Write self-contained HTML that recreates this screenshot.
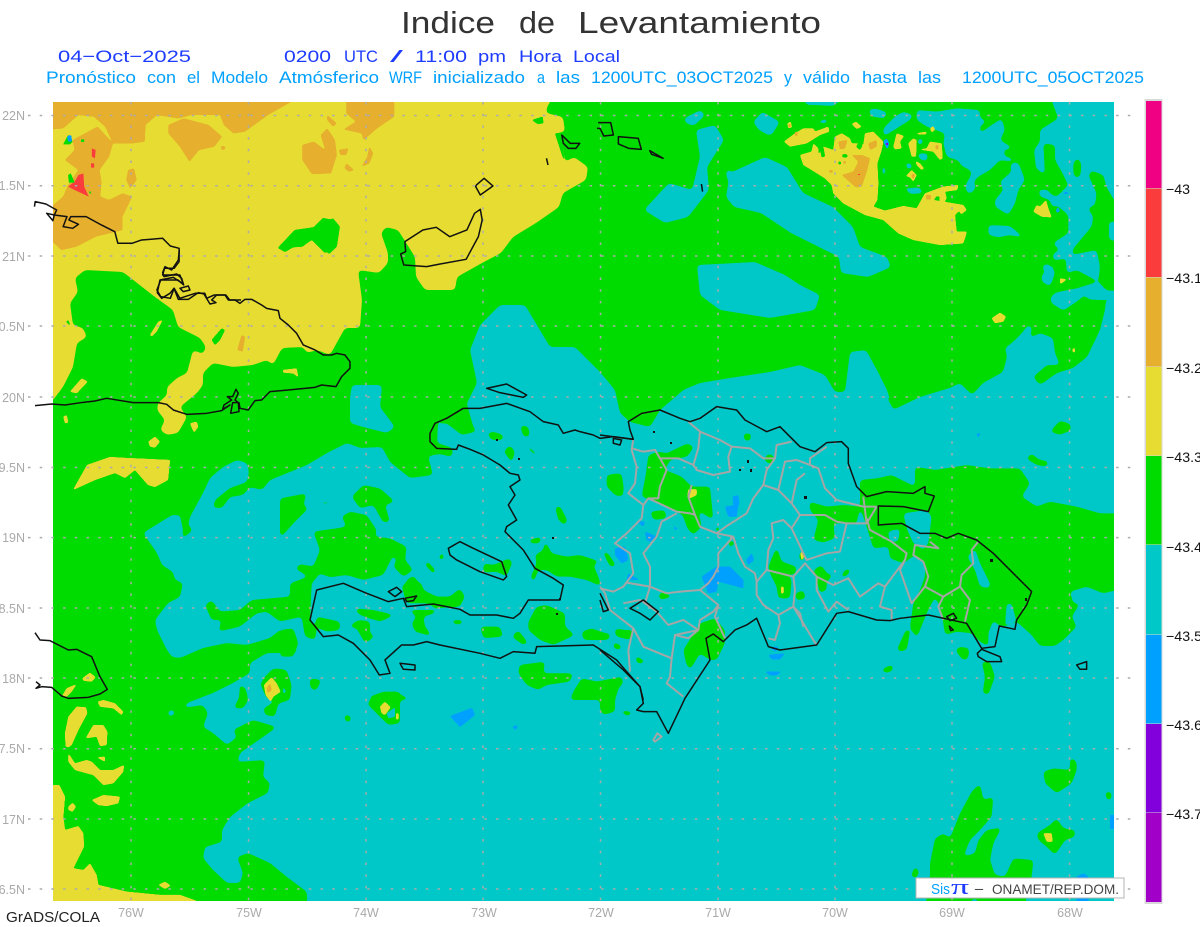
<!DOCTYPE html>
<html><head><meta charset="utf-8"><title>Indice de Levantamiento</title>
<style>html,body{margin:0;padding:0;background:#fff}svg{display:block}
text{font-family:"Liberation Sans",sans-serif}
.c{fill:#00c8c8}.g{fill:#00dc00}.y{fill:#e6dc32}.o{fill:#e6af2d}.r{fill:#fa3c3c}.b{fill:#00a0ff}
.coast *{fill:none;stroke:#111;stroke-width:1.5;stroke-linejoin:round;vector-effect:non-scaling-stroke}
.prov *{fill:none;stroke:#a6a6a6;stroke-width:2;stroke-linejoin:round;vector-effect:non-scaling-stroke}
.lab{fill:#aaa;font-size:12.5px}.cb{fill:#111;font-size:14px}
.t1 text{font-size:31px;fill:#333}.t2 text{font-size:17px;fill:#1e3cff}.t3 text{font-size:16.5px;fill:#00a0ff}
</style></head><body>
<svg width="1200" height="927" viewBox="0 0 1200 927" xmlns="http://www.w3.org/2000/svg">
<defs>
<clipPath id="m"><rect x="53" y="102" width="1061" height="799"/></clipPath>
<filter id="s" filterUnits="userSpaceOnUse" x="0" y="0" width="1200" height="927" color-interpolation-filters="sRGB"><feGaussianBlur stdDeviation="2"/><feColorMatrix values="1 0 0 0 0 0 1 0 0 0 0 0 1 0 0 0 0 0 12 -5.5"/></filter>
<filter id="t" filterUnits="userSpaceOnUse" x="0" y="0" width="1200" height="927" color-interpolation-filters="sRGB"><feGaussianBlur stdDeviation="0.9"/><feColorMatrix values="1 0 0 0 0 0 1 0 0 0 0 0 1 0 0 0 0 0 8 -3"/></filter>
</defs>
<rect width="1200" height="927" fill="#fff"/>
<g class="t1">
<text x="401" y="33" textLength="94" lengthAdjust="spacingAndGlyphs">Indice</text>
<text x="519" y="33" textLength="36" lengthAdjust="spacingAndGlyphs">de</text>
<text x="578" y="33" textLength="243" lengthAdjust="spacingAndGlyphs">Levantamiento</text>
</g>
<g class="t2">
<text x="58" y="62" textLength="133" lengthAdjust="spacingAndGlyphs">04−Oct−2025</text>
<text x="284" y="62" textLength="47" lengthAdjust="spacingAndGlyphs">0200</text>
<text x="344" y="62" textLength="34" lengthAdjust="spacingAndGlyphs">UTC</text>
<text x="390" y="62" textLength="13" lengthAdjust="spacingAndGlyphs">/</text>
<text x="415" y="62" textLength="52" lengthAdjust="spacingAndGlyphs">11:00</text>
<text x="478" y="62" textLength="28" lengthAdjust="spacingAndGlyphs">pm</text>
<text x="519" y="62" textLength="43" lengthAdjust="spacingAndGlyphs">Hora</text>
<text x="573" y="62" textLength="47" lengthAdjust="spacingAndGlyphs">Local</text>
</g>
<g class="t3">
<text x="46" y="83" textLength="90" lengthAdjust="spacingAndGlyphs">Pronóstico</text>
<text x="147" y="83" textLength="29" lengthAdjust="spacingAndGlyphs">con</text>
<text x="187" y="83" textLength="13" lengthAdjust="spacingAndGlyphs">el</text>
<text x="211" y="83" textLength="57" lengthAdjust="spacingAndGlyphs">Modelo</text>
<text x="279" y="83" textLength="100" lengthAdjust="spacingAndGlyphs">Atmósferico</text>
<text x="389" y="83" textLength="33" lengthAdjust="spacingAndGlyphs">WRF</text>
<text x="433" y="83" textLength="92" lengthAdjust="spacingAndGlyphs">inicializado</text>
<text x="537" y="83" textLength="8" lengthAdjust="spacingAndGlyphs">a</text>
<text x="556" y="83" textLength="24" lengthAdjust="spacingAndGlyphs">las</text>
<text x="591" y="83" textLength="182" lengthAdjust="spacingAndGlyphs">1200UTC_03OCT2025</text>
<text x="784" y="83" textLength="8" lengthAdjust="spacingAndGlyphs">y</text>
<text x="803" y="83" textLength="47" lengthAdjust="spacingAndGlyphs">válido</text>
<text x="862" y="83" textLength="45" lengthAdjust="spacingAndGlyphs">hasta</text>
<text x="918" y="83" textLength="23" lengthAdjust="spacingAndGlyphs">las</text>
<text x="962" y="83" textLength="182" lengthAdjust="spacingAndGlyphs">1200UTC_05OCT2025</text>
</g>
<g clip-path="url(#m)">
<rect x="53" y="102" width="1061" height="799" class="c"/>
<g filter="url(#s)"><polygon class="g" points="45,94 1122,94 1122,292 1106,300 1105,310 1100,330 1087,357 1073,368 1057,373 1040,385 1033,377 1047,365 1060,365 1055,353 1053,338 1040,333 1030,338 1032,327 1028,325 1022,333 1013,342 1005,348 1007,357 1003,372 983,383 972,395 960,383 950,388 943,390 920,397 893,410 887,390 878,372 866,350 850,352 845,392 835,392 825,375 800,365 770,372 730,378 700,383 683,390 680,393 660,410 650,427 630,422 620,413 615,390 600,372 575,347 550,347 525,305 500,305 480,325 470,350 477,383 467,403 453,413 438,423 437,443 453,448 452,457 440,454 428,456 433,475 410,478 390,462 382,447 360,448 347,443 327,453 307,465 290,472 270,480 262,490 250,487 243,495 230,497 222,508 213,508 215,500 230,488 247,482 249,472 247,463 237,460 223,467 210,478 203,493 190,517 188,525 193,530 182,539 183,530 180,515 172,515 143,533 157,553 162,565 173,572 175,580 183,583 180,597 168,603 155,620 157,630 167,650 172,657 180,658 203,648 227,643 247,645 270,638 280,630 293,632 297,653 267,653 250,663 250,673 233,683 213,693 187,703 183,708 203,705 208,713 203,727 213,733 227,745 237,737 233,730 253,720 277,727 263,737 240,753 237,762 265,760 263,777 270,783 268,793 248,803 230,817 222,830 222,842 205,847 203,858 213,870 227,883 240,883 243,873 237,857 248,853 270,863 287,877 307,892 307,910 45,910"/></g>
<!-- cyan on green -->
<g filter="url(#s)"><g class="c">
<polygon points="350,397 352,385 382,385 380,407 395,427 387,433 363,427 350,423"/>
<polygon points="726,197 730,173 765,157 787,167 803,193 833,207 853,227 860,247 887,257 891,267 868,277 841,273 839,257 791,233 761,213 734,207"/>
<polygon points="644,210 669,183 692,190 700,157 696,130 715,125 724,140 707,167 709,190 688,217 665,223"/>
<polygon points="697,265 755,262 785,275 800,285 820,295 815,310 770,318 720,310 700,295"/>
<g transform="translate(960,100) scale(.3333)">
<polygon points="265,-25 480,-25 480,310 462,300 440,262 430,225 395,212 385,225 410,280 405,315 383,325 400,350 395,380 340,445 335,465 410,450 420,500 415,545 350,510 320,520 318,475 280,482 278,462 300,450 278,430 325,400 325,345 290,315 295,285 325,255 305,215 285,180 285,135 250,130 255,225 228,205 222,150 240,125 240,90 295,55"/>
<polygon points="480,572 440,572 415,545 350,565 285,578 270,595 275,610 310,632 320,625 350,605 375,585 385,598 415,600 438,600 480,610"/>
<polygon points="0,25 45,45 80,65 50,85 60,100 95,75 125,55 135,90 120,120 160,145 130,150 135,170 165,175 150,185 120,180 90,210 55,230 40,245 48,265 30,282 18,270 18,250 38,225 30,210 0,195"/>
<polygon points="120,245 155,215 150,195 170,185 178,195 195,240 175,270 165,310 145,345 105,320 105,300 130,270"/>
<polygon points="245,525 258,515 245,505 255,490 278,500 285,520 270,560 245,545"/>
<polygon points="85,375 150,378 195,415 150,405 115,412 85,405"/>
<polygon points="447,365 480,365 480,425 447,420"/>
<polygon points="330,670 345,670 345,675 330,675"/><polygon points="38,642 50,650 42,658"/>
<polygon points="235,270 262,268 275,285 325,300 325,315 275,320 270,300 240,290"/>
</g>
<g transform="translate(770,100) scale(.3333)">
<polygon points="300,30 320,25 350,40 340,55 300,45"/>
<polygon points="340,85 375,50 400,35 430,45 420,60 380,85 340,110"/>
<polygon points="440,30 500,35 560,25 630,30 630,225 610,230 615,262 595,282 585,262 608,215 590,190 530,170 520,130 525,100 470,80 440,60"/>
<polygon points="140,65 170,55 175,70 135,70"/><polygon points="-10,60 30,65 5,105 -10,105"/>
<polygon points="95,-10 175,-10 150,15 110,15"/><polygon points="225,-10 250,-10 240,10"/>
<polygon points="238,110 255,105 252,118 240,118"/><polygon points="130,85 140,80 147,90 138,97"/>
<polygon points="405,185 430,195 420,210 410,205"/><polygon points="440,160 475,160 470,185 450,178"/>
<polygon points="395,235 410,265 450,262 460,280 420,282 400,262"/><polygon points="450,225 455,235 445,238"/>
<polygon points="442,120 455,110 460,130 445,138"/><polygon points="465,110 485,98 475,120"/>
<polygon points="118,245 130,260 120,262"/><polygon points="335,200 345,195 348,225 338,230"/>
</g>
<g transform="translate(600,0) scale(.3827,.3333)">
<polygon points="220,355 262,330 275,345 245,378 222,368"/>
<polygon points="425,335 445,350 470,365 440,405 415,390 400,365"/>
<polygon points="700,325 750,335 745,355 710,350"/>
<polygon points="330,505 365,535 345,560 330,530"/>
<polygon points="540,290 640,290 610,318 560,315"/>
</g>
<g transform="translate(0,620) scale(.3333)">
<polygon points="500,275 520,268 527,280 510,292"/><polygon points="707,112 715,110 725,140 715,135"/>
</g>
</g></g>
<!-- green on cyan -->
<g filter="url(#s)"><g class="g">
<g transform="translate(960,100) scale(.3333)">
<polygon points="340,190 352,172 364,190 362,225 350,237 340,220"/>
<polygon points="275,995 300,962 330,975 333,995"/>
</g>
<g transform="translate(130,440) scale(.3333)">
<polygon points="225,495 245,480 270,515 330,510 365,480 480,470 480,430 535,410 495,385 510,372 550,380 570,330 550,275 620,265 650,260 635,230 660,215 710,225 740,270 735,290 780,295 830,320 825,360 850,390 820,410 875,430 880,450 820,410 790,380 800,360 790,345 760,405 700,420 650,405 600,412 570,400 545,430 540,540 560,570 555,600 525,590 515,530 450,545 410,515 380,520 330,560 265,575 275,540 245,540"/>
<polygon points="400,715 430,685 470,700 480,720 400,720"/>
</g>
<g transform="translate(280,380) scale(.3333)">
<polygon points="355,0 590,0 590,10 560,70 580,140 590,155 545,165 500,130 475,130 470,100 440,60"/>
<polygon points="0,355 80,340 70,375 85,385 40,430 0,475"/>
<polygon points="0,750 40,745 55,790 40,830 0,830"/>
<polygon points="400,585 430,630 470,650 510,650 540,625 555,650 540,680 470,685 440,670 380,670 365,620"/>
<polygon points="385,690 470,690 465,700 430,710 435,740 458,770 405,755 395,730 410,710"/>
<polygon points="620,160 640,155 670,165 670,180 635,180"/>
<polygon points="720,135 745,140 750,170 730,170"/>
<polygon points="690,100 700,105 695,120 685,110"/>
<polygon points="670,215 690,195 705,215 695,250 680,225"/>
<polygon points="745,195 775,225 765,228 742,205"/>
<polygon points="985,285 1025,280 1032,330 1010,350 985,315"/>
<polygon points="825,380 840,378 862,420 855,437 835,420"/>
<polygon points="765,525 790,510 795,480 815,520 860,530 900,525 960,545 940,555 955,590 965,620 920,600 870,590 830,590 800,570 775,570 760,610 752,590 770,550"/>
<polygon points="745,480 785,470 780,490 750,490"/>
<polygon points="440,540 470,575 460,582 435,555"/>
<polygon points="475,530 490,515 493,538 478,540"/>
<polygon points="610,550 640,555 665,545 685,535 698,545 680,590 650,575 610,578"/>
<polygon points="220,685 280,690 345,705 300,725 240,705"/>
<polygon points="205,740 235,720 270,725 270,760 285,770 255,790 230,745"/>
<polygon points="110,710 180,725 180,750 140,755 105,740"/>
<polygon points="515,720 555,720 540,735 515,730"/>
<polygon points="600,740 660,740 670,770 610,775"/>
<polygon points="695,770 715,750 745,790 730,795"/>
<polygon points="770,680 800,675 855,700 855,740 885,765 820,795 780,780 745,750 745,725"/>
<polygon points="905,755 935,745 990,765 985,780 910,780"/>
<polygon points="1005,745 1060,755 1050,780 1010,770"/>
<polygon points="1000,785 1030,800 1005,808"/>
<polygon points="1065,825 1100,850 1075,850"/>
<polygon points="718,855 795,845 790,880 880,880 870,905 800,915 775,930 740,915 715,880"/>
<polygon points="880,935 905,895 950,905 1025,890 1030,910 1005,935 1000,960 870,960"/>
<polygon points="90,895 125,900 105,930 90,920"/>
<polygon points="270,950 310,935 380,950 385,960 270,960"/>
<polygon points="215,350 250,315 300,325 345,365 315,375 330,425 310,428 280,375 240,385"/>
<polygon points="100,378 130,365 160,360 145,372"/>
<polygon points="352,460 365,455 372,470 360,470"/>
</g>
<g transform="translate(600,390) scale(.3333)">
<polygon points="175,185 200,190 262,160 282,170 262,200 210,210 195,240 245,260 275,290 330,290 340,390 295,362 305,410 280,435 262,415 248,375 190,345 125,320 138,250 145,195"/>
<polygon points="20,255 55,250 72,320 45,315 20,290"/>
<polygon points="430,130 455,130 450,155 432,150"/>
<polygon points="150,365 195,360 200,385 160,390"/>
<polygon points="5,480 25,490 50,530 30,530"/>
<polygon points="505,190 525,200 515,225 490,210"/>
<polygon points="380,155 398,160 385,170"/><polygon points="435,180 450,180 440,190"/>
<polygon points="505,530 530,470 545,515 590,530 585,555 560,550 575,570 570,625 535,625 530,590 510,550"/>
<polygon points="600,480 615,490 610,515 597,510"/>
<polygon points="585,610 610,600 618,625 590,632"/>
<polygon points="640,540 665,525 680,550 700,555 680,575 680,600 660,610 650,570"/>
<polygon points="720,560 740,535 755,540 735,562"/>
<polygon points="628,335 680,350 730,345 780,350 770,400 740,400 700,400 705,445 670,458 640,450 655,390 630,360"/>
<polygon points="180,605 225,620 175,630"/>
<polygon points="385,455 405,450 400,470 385,470"/>
<polygon points="345,410 360,410 360,425 345,425"/>
<polygon points="0,880 65,865 45,930 45,965 10,975 0,960"/>
<polygon points="50,960 100,965 85,980"/>
<polygon points="0,730 30,730 30,745 0,748"/>
<polygon points="45,720 100,720 85,745 45,735"/>
<polygon points="40,760 65,770 60,780 40,775"/>
<polygon points="105,795 130,810 135,820 110,820"/>
<polygon points="165,790 195,805 195,815"/>
<polygon points="250,780 300,700 345,685 375,720 375,760 350,810 330,810 300,790 270,840 258,820"/>
<polygon points="470,620 490,645 478,645"/>
</g>
<g transform="translate(860,400) scale(.3333)">
<polygon points="0,240 50,235 95,225 135,245 165,260 165,200 225,210 320,195 390,205 480,205 510,250 485,290 530,320 570,305 650,320 720,340 790,340 790,565 730,580 680,560 630,575 640,610 660,610 635,650 650,680 610,720 585,738 540,738 515,705 470,665 432,680 415,675 400,660 385,700 385,740 360,725 335,700 290,695 255,705 250,670 240,620 225,590 200,640 170,715 150,680 160,610 180,570 195,530 195,490 165,465 130,490 90,475 85,440 40,445 20,380 0,320"/>
<polygon points="110,750 140,685 150,695 140,750 120,755"/>
<polygon points="285,750 300,740 328,745 325,775 310,782"/>
<polygon points="60,810 98,793 100,810 80,820"/>
<polygon points="180,800 190,785 190,805"/>
<polygon points="140,850 152,835 155,855"/>
<polygon points="365,785 390,785 405,830 385,885 368,880 375,830"/>
<polygon points="570,95 600,62 632,72 632,90 600,105"/>
<polygon points="498,175 515,160 535,178 567,185 560,200 530,195"/>
<polygon points="80,-10 140,-10 100,30"/>
</g>
<g transform="translate(880,750) scale(.3333)">
<polygon points="490,65 520,55 570,60 570,20 590,35 590,60 575,100 530,130 495,100"/>
<polygon points="675,125 695,125 695,150 680,150"/>
<polygon points="558,135 570,140 565,150"/><polygon points="575,155 588,155 580,167"/>
<polygon points="470,250 510,225 530,205 550,235 585,240 585,260 555,270 525,315 500,290 475,270"/>
<polygon points="150,340 165,265 190,250 210,265 240,190 275,125 300,100 310,150 340,140 335,200 300,240 270,270 250,320 285,310 295,270 320,240 365,232 340,280 330,330 345,375 375,380 400,325 460,330 455,380 432,475 295,475 290,440 245,475 135,475 150,380"/>
<polygon points="92,380 105,347 118,365 110,385"/>
</g>
<g transform="translate(0,620) scale(.3333)">
<polygon points="780,190 830,145 860,150 875,195 870,240 835,250 825,290 795,285 790,265 825,245 800,235"/>
<polygon points="928,180 965,178 950,210 935,210"/>
<polygon points="1030,285 1050,285 1055,300 1040,310"/>
<polygon points="1100,250 1155,215 1200,215 1200,310 1165,315 1130,280"/>
<polygon points="700,265 717,235 720,190 738,208 745,240 730,265"/>
</g>
</g></g>
<g filter="url(#s)"><g class="c" transform="translate(860,400) scale(.3333)">
<polygon points="130,340 200,330 215,350 205,430 190,450 160,430 140,385"/>
<polygon points="83,395 120,385 115,425 90,425"/>
<polygon points="440,610 455,610 470,665 435,680"/>
<polygon points="322,470 345,445 360,490 390,550 390,565 360,560 345,510"/>
</g></g>
<g filter="url(#t)"><g class="c" transform="translate(0,620) scale(.3333)">
<polygon points="850,200 858,215 850,222"/>
<polygon points="1160,280 1185,262 1185,290 1165,295"/>
</g></g>
<!-- yellow -->
<g filter="url(#s)"><polygon class="y" points="45,94 555,94 547,107 546,113 563,117 565,132 555,133 563,147 565,162 574,157 588,167 586,180 563,193 559,207 536,223 513,237 501,253 482,263 457,277 455,290 425,290 416,277 415,257 398,230 386,227 381,233 388,253 388,263 379,273 358,270 362,300 360,328 345,328 340,337 330,355 317,350 307,353 303,347 282,348 273,365 267,360 253,365 233,367 213,363 203,373 203,385 197,393 180,407 187,417 178,433 167,435 160,430 165,420 157,410 158,403 167,395 167,387 177,378 187,373 193,350 203,354 206,347 200,338 178,327 173,310 155,297 123,272 85,270 75,278 78,292 70,303 73,325 83,328 87,337 77,343 73,367 63,387 53,400 45,405"/></g>
<g filter="url(#t)"><g class="g">
<g transform="translate(40,250) scale(.3333)">
<polygon points="515,270 545,235 555,240 540,270 525,285"/>
<polygon points="78,215 85,210 92,230"/>
</g>
<polygon points="278,248 295,240 305,236 323,218 333,220 337,245 325,253 312,240 297,245 285,252" />
<g transform="scale(.3827,.3333)">
<polygon points="1390,360 1418,350 1420,370 1405,372"/>
<polygon points="725,745 770,690 830,680 870,655 888,680 880,740 860,762 820,715 790,740"/>
<polygon points="1450,400 1465,400 1476,485 1470,470"/>
</g>
</g></g>
<g filter="url(#t)"><g class="y">
<g transform="translate(40,250) scale(.3333)">
<polygon points="90,425 125,385 143,395 110,430"/>
<polygon points="330,255 355,215 368,210 350,245 335,260"/>
<polygon points="728,360 770,355 775,382 760,370 730,368"/>
<polygon points="70,500 80,495 85,518 75,520"/>
<polygon points="450,520 470,515 475,530 462,548"/>
<polygon points="325,575 345,560 360,575 345,593 330,590"/>
</g>
<polygon points="73,490 87,465 110,457 127,458 170,460 168,480 155,487 148,485 135,470 125,478 115,473 95,480"/>
<g transform="translate(0,620) scale(.3333)">
<polygon points="185,230 200,205 230,192 215,215 200,230"/>
<polygon points="247,175 270,158 287,172 275,185 250,182"/>
<polygon points="293,245 310,240 345,250 370,275 365,285 340,265 300,260"/>
<polygon points="197,380 195,340 205,290 230,260 258,262 262,280 235,330 215,375 205,382"/>
<polygon points="257,355 280,315 310,315 322,335 320,375 300,378 290,350"/>
<polygon points="205,400 225,430 260,420 275,425 300,450 340,450 372,435 370,455 340,490 310,495 280,465 225,450 205,425"/>
<polygon points="290,412 315,410 315,425"/>
<polygon points="275,540 310,525 360,530 355,550 320,558 295,555"/>
<polygon points="205,560 218,548 228,560 218,575 205,570"/>
<polygon points="135,495 178,495 195,530 190,590 195,630 235,618 250,640 252,680 220,745 250,750 270,730 290,765 295,795 380,815 480,825 540,825 590,843 610,870 135,870"/>
<polygon points="475,795 495,785 512,797 495,807"/>
<polygon points="792,195 815,172 830,190 842,215 820,230 812,245 797,225"/>
<polygon points="1140,260 1155,245 1172,262 1155,285 1145,280"/>
<polygon points="1188,280 1196,280 1196,298 1188,298"/>
</g>
<g transform="translate(770,100) scale(.3333)">
<polygon points="90,165 125,155 130,130 145,145 145,165 160,140 190,150 195,110 215,100 240,115 245,130 260,130 280,135 285,100 310,95 340,125 335,150 322,190 325,250 322,300 310,320 345,332 400,318 440,325 465,280 520,260 565,255 562,270 525,275 530,295 520,310 500,290 490,300 580,315 590,330 565,335 555,345 560,395 590,395 580,430 510,435 430,420 385,400 340,360 285,345 220,310 190,280 185,255 165,235 125,210 100,195"/>
<polygon points="42,125 75,100 100,85 130,85 135,95 175,80 178,95 150,105 110,130 60,140"/>
<polygon points="52,70 62,65 66,82 55,85"/>
<polygon points="245,72 258,65 275,80 260,87"/>
<polygon points="370,140 380,100 402,108 390,125 395,145 375,148"/>
<polygon points="415,130 430,115 440,120 438,170 425,170"/>
<polygon points="445,148 470,145 480,125 515,130 518,175 510,180 490,155"/>
<polygon points="438,100 470,95 468,103 445,103"/>
<polygon points="480,85 490,78 495,90 485,97"/>
<polygon points="437,183 450,190 462,205 455,210 440,195"/>
<polygon points="408,228 425,210 440,225 430,245 420,232"/>
<polygon points="378,210 383,207 383,215"/>
</g>
<g transform="translate(960,100) scale(.3333)">
<polygon points="95,655 120,638 138,650 130,665 105,670"/>
<polygon points="0,315 20,330 5,342 0,340"/>
<polygon points="0,400 20,396 15,415 0,432"/>
<polygon points="220,335 230,315 240,320 258,300 265,325 275,352 245,350"/>
<polygon points="300,535 320,538 305,550 300,550"/>
<polygon points="338,745 345,745 345,757 338,757"/>
</g>
<g transform="translate(600,390) scale(.3333)">
<polygon points="265,298 290,298 290,315 270,325 262,320"/>
<polygon points="601,490 607,484 613,498 605,512"/>
<polygon points="543,590 551,590 551,610 543,610"/>
</g>
<g transform="translate(880,750) scale(.3333)">
<polygon points="490,250 515,250 518,275 500,275"/>
</g>
</g></g>
<g filter="url(#t)"><g class="g" transform="translate(770,100) scale(.3333)">
<polygon points="217,163 232,163 232,172 217,172"/><polygon points="205,185 213,185 213,193 205,193"/>
<polygon points="150,148 160,140 165,170 155,172"/><polygon points="265,130 278,135 270,150 258,140"/>
<polygon points="495,290 510,290 505,305"/>
</g></g>
<!-- orange -->
<g filter="url(#t)"><g class="o">
<g transform="scale(.3827,.3333)">
<polygon points="115,280 775,280 760,306 700,345 640,395 610,400 585,375 575,345 500,345 465,355 410,345 380,375 378,425 345,430 295,430 275,380 245,350 205,345 165,385 115,390"/>
<polygon points="190,420 255,380 295,430 285,470 260,510 265,545 262,590 285,600 320,580 345,590 320,650 320,690 250,710 200,740 160,750 115,700 115,640 165,590 178,555 205,510 170,480 195,450"/>
<polygon points="440,375 480,355 545,375 580,410 560,440 520,450 495,485 470,440 440,400"/>
<polygon points="335,510 350,505 357,540 340,565 330,540"/>
<polygon points="905,280 1030,280 1030,350 985,385 950,420 945,400 898,388 930,365 905,340"/>
<polygon points="855,345 880,370 870,380 855,360"/>
<polygon points="855,385 875,420 880,465 865,520 815,522 790,480 790,435 820,425 850,450 838,405"/>
<polygon points="885,450 910,445 905,465 890,465"/>
<polygon points="965,440 975,460 965,490 945,500 960,470"/>
<polygon points="905,490 925,510 912,515 900,505"/>
<polygon points="578,438 590,440 585,450 578,448"/>
</g>
<g transform="translate(40,250) scale(.3333)"><polygon points="592,300 605,255 615,260 608,305"/></g>
<g transform="translate(770,100) scale(.3333)">
<polygon points="215,225 250,215 265,185 245,165 275,165 300,175 290,215 275,260 258,262"/>
<polygon points="205,125 232,120 225,145 210,148"/>
<polygon points="295,130 320,120 320,140 300,150"/>
<polygon points="468,285 483,285 483,298 468,298"/>
<polygon points="178,210 188,210 188,218 178,218"/><polygon points="220,183 228,183 228,191 220,191"/>
<polygon points="75,95 82,95 82,108 75,108"/><polygon points="55,72 62,72 62,82 55,82"/>
<polygon points="497,135 505,135 505,148 497,148"/><polygon points="425,222 435,222 432,235 426,235"/>
</g>
<g transform="translate(0,620) scale(.3333)"><polygon points="800,205 810,190 815,210 803,220"/></g>
</g></g>
<g class="r">
<g transform="scale(.3827,.3333)">
<polygon points="178,560 195,545 205,525 218,520 220,560 232,590 195,570"/>
<polygon points="240,445 250,450 248,475 240,470"/>
<polygon points="238,490 246,490 246,503 238,503"/>
</g>
<rect x="858" y="174" width="2" height="1"/>
</g>
<g class="g" transform="scale(.3827,.3333)">
<polygon points="165,433 178,405 190,425 183,433"/>
<polygon points="178,525 185,520 195,548 180,548"/>
<polygon points="212,418 220,418 220,426 212,426"/>
<polygon points="232,575 238,575 236,583"/>
</g>
<!-- blue -->
<g filter="url(#t)"><g class="b">
<g transform="scale(.3827,.3333)"><polygon points="176,408 186,405 188,425 178,425"/></g>
<g transform="translate(600,390) scale(.3333)">
<polygon points="45,475 75,470 85,510 65,520 45,495"/>
<polygon points="85,550 118,570 80,570"/>
<polygon points="305,560 350,530 390,530 430,570 430,595 395,585 355,575 350,605 325,610"/>
<polygon points="375,350 415,345 410,380 385,380"/>
<polygon points="398,320 415,315 418,345 400,345"/>
<polygon points="135,425 170,440 150,455 140,450"/>
<polygon points="110,395 135,395 130,410"/>
<polygon points="220,410 235,415 225,420"/>
<polygon points="438,510 455,490 462,510 445,525"/>
<polygon points="505,795 555,790 540,808 515,808"/>
<polygon points="495,845 545,845 530,856 510,856"/>
<polygon points="1130,130 1143,130 1133,143"/>
</g>
<polygon points="450,716 472,708 475,715 460,727"/>
<rect x="1064" y="192" width="4" height="2"/><polygon points="1056,210 1058,207 1060,211 1057,213"/>
<rect x="1110" y="815" width="6" height="14"/>
<g transform="translate(880,750) scale(.3333)"><polygon points="590,380 610,370 625,380 625,475 590,475"/></g>
<polygon points="770,648 778,646 776,652"/><polygon points="512,727 518,725 516,730"/>
<g transform="translate(770,100) scale(.3333)">
<polygon points="340,125 350,115 358,130 352,148"/>
</g>
</g></g>
<rect x="886" y="143" width="2" height="2" fill="#8200dc"/>
</g>
<!-- grid -->
<g stroke="#ababab" stroke-width="1.5" stroke-dasharray="2.5 9.2" fill="none">
<path d="M28 115.5H1132M28 185.7H1132M28 256H1132M28 326H1132M28 397H1132M28 467.5H1132M28 537.6H1132M28 608H1132M28 678H1132M28 748.7H1132M28 819H1132M28 889H1132"/>
<path d="M131 102V903M248.5 102V903M366 102V903M483 102V903M600.5 102V903M718 102V903M835 102V903M952 102V903M1069.5 102V903"/>
</g>
<!-- provinces -->
<g class="prov" transform="translate(600,390) scale(.3333)">
<polyline points="100,148 95,180 110,230 105,280 85,310 130,345 125,385 80,430 45,460 90,490 100,550 70,590 40,605 0,595"/>
<polyline points="95,175 130,185 165,180 180,205 235,205 280,225 295,175 300,125 360,150 395,170 450,175 490,205 525,205 530,165 575,155"/>
<polyline points="300,125 265,95"/>
<polyline points="395,170 385,200 390,245 340,255 290,240 280,225"/>
<polyline points="180,205 200,240 180,290 175,325 145,325 130,345"/>
<polyline points="145,325 230,365 270,370 285,375 300,410 350,430 385,405 440,370 460,325 490,285 500,240 525,205"/>
<polyline points="275,285 265,320 285,375"/>
<polyline points="490,285 535,300 555,215 590,210 630,225 655,235 675,295 710,330 790,350 830,350"/>
<polyline points="630,225 630,205 680,170"/>
<polyline points="615,250 590,270 575,340 600,375 675,375 710,395 740,400 800,400 830,350"/>
<polyline points="535,300 575,340"/>
<polyline points="600,375 575,415 610,490 620,510 680,490 720,485 740,400"/>
<polyline points="575,415 550,390 515,400 520,445 505,480 500,540 580,560 615,520 650,560 700,585 745,565 780,620 835,580 855,590 915,510 920,490 875,455 810,420 800,385"/>
<polyline points="350,430 400,440 415,490 435,530 465,550 470,575 500,540"/>
<polyline points="400,440 355,490 355,530 340,560 325,580 300,600 240,605 200,610 150,590 80,578"/>
<polyline points="300,600 355,645 340,665 300,690 295,720 250,690 205,705 170,665 135,640 150,590 150,530 130,490 170,440 185,395 230,370"/>
<polyline points="470,575 470,615 490,645 535,675 580,650 640,750 650,765"/>
<polyline points="535,675 540,700 525,750 505,745"/>
<polyline points="580,650 600,670 610,710"/>
<polyline points="650,560 650,600 685,665 710,635 745,660"/>
<polyline points="580,560 585,600 580,650"/>
<polyline points="855,590 840,650 875,660 875,690"/>
<polyline points="915,510 900,540 935,640 975,590 985,560 970,515 940,495 945,465 1015,475 990,455"/>
<polyline points="975,590 1030,620 1080,590 1110,630 1095,695"/>
<polyline points="1030,620 1015,650 1030,690"/>
<polyline points="1080,590 1085,555 1120,520 1115,480 1135,455"/>
<polyline points="800,400 790,320"/>
<polyline points="355,645 345,680 375,745"/>
<polyline points="295,720 225,735 215,805 210,860 200,880 250,920"/>
<polyline points="215,805 130,770 100,715 85,780 90,845"/>
<polyline points="225,735 265,745 295,720"/>
<polyline points="0,590 15,610 30,660 100,715"/>
<polyline points="70,640 120,630 175,665"/>
<polygon points="160,1050 172,1030 185,1040 165,1055"/>
</g>
<!-- coast -->
<g class="coast">
<g transform="scale(.3827,.3333)">
<polyline points="90,620 92,605 120,612 148,630 142,645 122,640 138,662 142,645 175,650 165,680 190,685 205,673 180,660 185,650 225,650 265,675 300,695 308,730 345,730 370,720 395,718 425,715 445,738 468,745 468,785 455,805 430,805 425,825 470,825 480,855 465,840 420,840 410,870 420,890 445,895 455,865 470,895 510,880 535,880 540,895 560,885 590,885 600,900 630,900"/>
<polygon points="1245,555 1265,535 1288,558 1255,585 1243,560"/>
<polygon points="1058,725 1105,690 1140,682 1175,710 1220,690 1240,640 1255,628 1260,660 1250,710 1218,778 1150,792 1115,800 1055,795 1047,762 1060,755"/>
<polygon points="1468,405 1490,430 1515,430 1505,445 1485,445 1472,430"/>
<polyline points="1428,475 1432,495"/>
</g>
<g transform="translate(600,0) scale(.3827,.3333)">
<polyline points="-5,368 28,368 35,405 10,408 0,385 -8,385"/>
<polygon points="48,410 100,415 108,448 75,445 48,432"/>
<polygon points="130,452 165,475 135,463"/>
<polyline points="265,552 268,575"/>
</g>
<g transform="translate(40,250) scale(.3333)">
<polyline points="418,0 415,30 395,60 375,50 368,68 372,80 410,72 425,85 430,102 400,82 360,90 352,128 365,145 390,130 402,115 415,148 445,148 475,128 492,132 510,162 528,158 515,150 530,135 555,135 565,150 585,150 600,160 615,148 635,148 665,165 680,175 715,182 720,205 745,225 770,250 790,285 825,300 850,315 875,315 890,310 915,315 930,335 930,355 905,380 888,410 845,405 825,412 745,420 690,425 665,450 645,452 625,480 600,475 597,458 578,458 572,490 597,485 595,458 585,450 595,430 588,418 578,440 562,440 575,450 552,465 548,478 570,465 545,482 500,490 440,493 400,480 380,463 355,458 280,458 200,445 165,453 130,457 75,465 35,462 -15,467"/>
<polygon points="420,115 445,108 450,120 430,125"/>
</g>
<g transform="translate(0,620) scale(.3333)">
<polyline points="105,38 120,60 150,62 205,90 230,88 275,110 300,170 322,208 300,222 265,232 205,235 185,228 155,202 125,200 108,205 120,195 108,185"/>
</g>
<g transform="translate(280,380) scale(.3333)">
<polyline points="1062,178 1000,170 960,175 940,165 900,155 885,150 850,160 835,135 790,125 750,95 680,70 600,85 550,85 500,115 465,130 450,160 450,185 470,205 530,208 535,195 570,208 610,225 660,255 690,280 715,285 720,300 690,320 705,345 685,375 710,420 680,440 675,455 730,510 765,565 820,595 850,615 840,660 745,660 720,700 700,715 650,705 570,705 540,688 460,672 380,680 370,655 325,665 260,640 190,610 110,630 90,720 130,770 175,765 220,790 270,840 298,885 330,880 315,840 365,795 400,795 440,785 480,795 600,820 660,835 700,815 765,820 770,800 940,795 1010,840 1040,875 1080,920 1090,960"/>
<polygon points="505,505 540,485 580,505 665,545 680,590 670,600 600,575 530,540 510,525"/>
<polygon points="620,25 680,12 740,45 730,52 660,38"/>
<polygon points="325,635 350,622 365,635 345,650"/>
<polygon points="375,655 410,648 400,662 380,665"/>
<polygon points="360,850 405,855 405,870 370,868"/>
</g>
<g transform="translate(600,390) scale(.3333)">
<polyline points="100,148 90,120 85,95 125,70 180,60 240,85 270,95 300,85 350,50 410,60 435,90 500,125 540,110 600,170 645,185 680,158 725,155 745,175 745,220 770,290 800,320 860,305 940,310 975,290 975,310 1003,318 985,365 910,350 835,348 835,405 905,400 960,430 1005,430 1040,445 1075,430 1130,450 1180,490 1295,605 1280,645 1250,690 1245,718 1198,708 1185,770 1145,775 1100,700 985,675 900,685 870,692 830,690 745,665 710,670 650,765 540,780 505,770 495,745 470,685 440,705 405,720 370,755 340,732 318,745 330,810 255,925 205,1030 170,965 130,965 110,960 130,940 120,890 70,840 0,780"/>
<polyline points="0,135 100,148"/>
<polygon points="1132,790 1145,778 1200,800 1205,815 1160,815 1135,800"/>
<polygon points="1040,680 1060,670 1070,685 1050,692"/>
<polygon points="1048,708 1060,720 1052,722"/>
<polygon points="90,655 130,630 175,665 150,690 120,670"/>
<polyline points="0,610 25,660 10,665 0,630"/>
<polygon points="40,145 65,150 60,165 40,160"/>
</g>
<g transform="translate(860,400) scale(.3333)"><polygon points="650,795 680,785 680,808 660,808"/></g>
</g>
<g fill="#111">
<rect x="653" y="431" width="2" height="2"/><rect x="670" y="442" width="2" height="2"/><rect x="747" y="460" width="2" height="3"/><rect x="739" y="469" width="2" height="2"/><rect x="750" y="469" width="2" height="3"/><rect x="804" y="496" width="3" height="3"/><rect x="990" y="559" width="3" height="3"/><rect x="1025" y="598" width="2" height="3"/><rect x="496" y="439" width="2" height="2"/><rect x="552" y="537" width="2" height="2"/><rect x="518" y="458" width="2" height="2"/><rect x="556" y="613" width="2" height="2"/><rect x="559" y="598" width="2" height="2"/>
</g>
<!-- labels -->
<g class="lab" text-anchor="end">
<text x="25" y="120">22N</text><text x="25" y="190">1.5N</text><text x="25" y="261">21N</text><text x="25" y="331">0.5N</text><text x="25" y="402">20N</text><text x="25" y="472">9.5N</text><text x="25" y="542">19N</text><text x="25" y="613">8.5N</text><text x="25" y="683">18N</text><text x="25" y="753">7.5N</text><text x="25" y="824">17N</text><text x="25" y="894">6.5N</text>
</g>
<g class="lab" text-anchor="middle">
<text x="131" y="917">76W</text><text x="249" y="917">75W</text><text x="366" y="917">74W</text><text x="484" y="917">73W</text><text x="601" y="917">72W</text><text x="718" y="917">71W</text><text x="835" y="917">70W</text><text x="952" y="917">69W</text><text x="1070" y="917">68W</text>
</g>
<text x="6" y="922" font-size="15" fill="#222" textLength="94" lengthAdjust="spacingAndGlyphs">GrADS/COLA</text>
<!-- logo -->
<rect x="916" y="878" width="208" height="20" fill="#fff" stroke="#b4b4b4"/>
<text x="931" y="894" font-size="15" fill="#00a0ff" textLength="19" lengthAdjust="spacingAndGlyphs">Sis</text>
<text x="951" y="894" font-size="22" fill="#1e3cff" style="font-family:'Liberation Serif',serif" textLength="18" lengthAdjust="spacingAndGlyphs">π</text>
<text x="974" y="894" font-size="14" fill="#444" textLength="10" lengthAdjust="spacingAndGlyphs">−</text>
<text x="992" y="894" font-size="14" fill="#444" textLength="127" lengthAdjust="spacingAndGlyphs">ONAMET/REP.DOM.</text>
<!-- colorbar -->
<rect x="1144.5" y="99" width="18" height="805" fill="#d8d8d8"/>
<rect x="1146" y="101" width="15.5" height="87" fill="#f00082"/>
<rect x="1146" y="188.5" width="15.5" height="88.5" fill="#fa3c3c"/>
<rect x="1146" y="277.5" width="15.5" height="89" fill="#e6af2d"/>
<rect x="1146" y="367" width="15.5" height="88.5" fill="#e6dc32"/>
<rect x="1146" y="456" width="15.5" height="88.5" fill="#00dc00"/>
<rect x="1146" y="545" width="15.5" height="89.5" fill="#00c8c8"/>
<rect x="1146" y="635" width="15.5" height="88.5" fill="#00a0ff"/>
<rect x="1146" y="724" width="15.5" height="88.5" fill="#8200dc"/>
<rect x="1146" y="813" width="15.5" height="89" fill="#a000c8"/>
<g class="cb">
<text x="1166" y="194" textLength="24" lengthAdjust="spacingAndGlyphs">−43</text><text x="1166" y="283" textLength="36" lengthAdjust="spacingAndGlyphs">−43.1</text><text x="1166" y="373" textLength="36" lengthAdjust="spacingAndGlyphs">−43.2</text><text x="1166" y="462" textLength="36" lengthAdjust="spacingAndGlyphs">−43.3</text><text x="1166" y="552" textLength="36" lengthAdjust="spacingAndGlyphs">−43.4</text><text x="1166" y="641" textLength="36" lengthAdjust="spacingAndGlyphs">−43.5</text><text x="1166" y="730" textLength="36" lengthAdjust="spacingAndGlyphs">−43.6</text><text x="1166" y="819" textLength="36" lengthAdjust="spacingAndGlyphs">−43.7</text>
</g>
</svg>
</body></html>
